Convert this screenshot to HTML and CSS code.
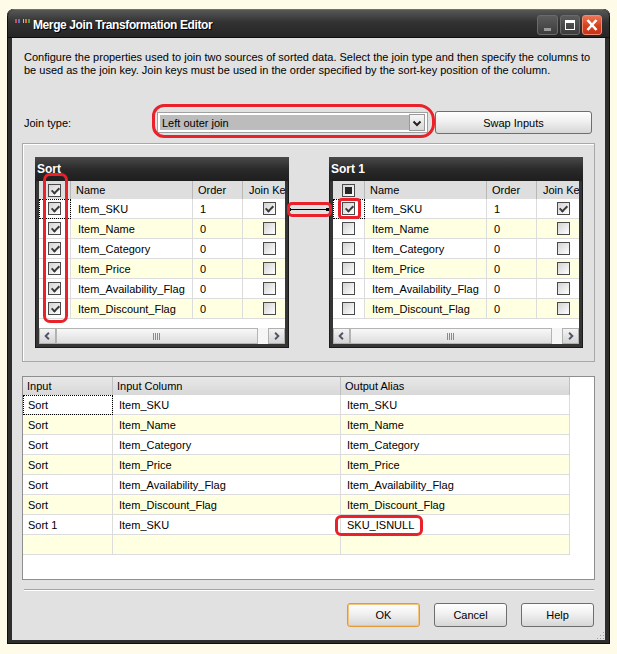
FILE: index.html
```html
<!DOCTYPE html>
<html lang="en">
<head>
    <meta charset="UTF-8">
    <meta name="viewport" content="width=device-width, initial-scale=1.0">
    <title>Merge Join Transformation Editor</title>
    <link rel="stylesheet" href="styles.css">
</head>
<body>
<div class="window">
    <div class="titlebar">
        <span class="app-icon"><i class="i1"></i><i class="i2"></i><i class="i3"></i><i class="i4"></i><i class="i5"></i></span>
        <span class="title">Merge Join Transformation Editor</span>
        <span class="caption-btns">
            <span class="cap-btn min"><i></i></span>
            <span class="cap-btn max"><i></i></span>
            <span class="cap-btn close">
                <svg width="20" height="20" viewBox="0 0 20 20"><path d="M5.5 5 L14.5 15 M14.5 5 L5.5 15" stroke="#fff" stroke-width="2.6" fill="none"/></svg>
            </span>
        </span>
    </div>

    <div class="content">
        <p class="intro">Configure the properties used to join two sources of sorted data. Select the join type and then specify the columns to<br>be used as the join key. Join keys must be used in the order specified by the sort-key position of the column.</p>

        <div class="join-row">
            <label class="join-label">Join type:</label>
            <div class="combo">
                <span class="combo-text">Left outer join</span>
                <span class="combo-drop">
                    <svg width="14" height="16" viewBox="0 0 14 16"><path d="M3.5 6.5 L7 10 L10.5 6.5" stroke="#222" stroke-width="2" fill="none"/></svg>
                </span>
            </div>
            <button class="btn swap">Swap Inputs</button>
        </div>

        <div class="inputs">
            <div class="src">
                <div class="src-title">Sort</div>
                <div class="src-grid">
                    <div class="row head"><span class="c0"><i class="cb on"></i></span><span class="c1">Name</span><span class="c2">Order</span><span class="c3">Join Key</span></div>
                    <div class="row"><span class="c0 focus"><i class="cb on"></i></span><span class="c1">Item_SKU</span><span class="c2">1</span><span class="c3"><i class="cb on"></i></span></div>
                    <div class="row alt"><span class="c0"><i class="cb on"></i></span><span class="c1">Item_Name</span><span class="c2">0</span><span class="c3"><i class="cb"></i></span></div>
                    <div class="row"><span class="c0"><i class="cb on"></i></span><span class="c1">Item_Category</span><span class="c2">0</span><span class="c3"><i class="cb"></i></span></div>
                    <div class="row alt"><span class="c0"><i class="cb on"></i></span><span class="c1">Item_Price</span><span class="c2">0</span><span class="c3"><i class="cb"></i></span></div>
                    <div class="row"><span class="c0"><i class="cb on"></i></span><span class="c1">Item_Availability_Flag</span><span class="c2">0</span><span class="c3"><i class="cb"></i></span></div>
                    <div class="row alt"><span class="c0"><i class="cb on"></i></span><span class="c1">Item_Discount_Flag</span><span class="c2">0</span><span class="c3"><i class="cb"></i></span></div>
                    <div class="hscroll">
                        <span class="sb-btn"><svg width="16" height="14" viewBox="0 0 16 14"><path d="M9.5 3.5 L6 7 L9.5 10.5" stroke="#4c5466" stroke-width="2" fill="none"/></svg></span>
                        <span class="sb-thumb"><i class="grip"></i></span>
                        <span class="sb-btn"><svg width="16" height="14" viewBox="0 0 16 14"><path d="M6.5 3.5 L10 7 L6.5 10.5" stroke="#4c5466" stroke-width="2" fill="none"/></svg></span>
                    </div>
                </div>
            </div>

            <div class="src">
                <div class="src-title">Sort 1</div>
                <div class="src-grid">
                    <div class="row head"><span class="c0"><i class="cb part"></i></span><span class="c1">Name</span><span class="c2">Order</span><span class="c3">Join Key</span></div>
                    <div class="row"><span class="c0 focus"><i class="cb on"></i></span><span class="c1">Item_SKU</span><span class="c2">1</span><span class="c3"><i class="cb on"></i></span></div>
                    <div class="row alt"><span class="c0"><i class="cb"></i></span><span class="c1">Item_Name</span><span class="c2">0</span><span class="c3"><i class="cb"></i></span></div>
                    <div class="row"><span class="c0"><i class="cb"></i></span><span class="c1">Item_Category</span><span class="c2">0</span><span class="c3"><i class="cb"></i></span></div>
                    <div class="row alt"><span class="c0"><i class="cb"></i></span><span class="c1">Item_Price</span><span class="c2">0</span><span class="c3"><i class="cb"></i></span></div>
                    <div class="row"><span class="c0"><i class="cb"></i></span><span class="c1">Item_Availability_Flag</span><span class="c2">0</span><span class="c3"><i class="cb"></i></span></div>
                    <div class="row alt"><span class="c0"><i class="cb"></i></span><span class="c1">Item_Discount_Flag</span><span class="c2">0</span><span class="c3"><i class="cb"></i></span></div>
                    <div class="hscroll">
                        <span class="sb-btn"><svg width="16" height="14" viewBox="0 0 16 14"><path d="M9.5 3.5 L6 7 L9.5 10.5" stroke="#4c5466" stroke-width="2" fill="none"/></svg></span>
                        <span class="sb-thumb"><i class="grip"></i></span>
                        <span class="sb-btn"><svg width="16" height="14" viewBox="0 0 16 14"><path d="M6.5 3.5 L10 7 L6.5 10.5" stroke="#4c5466" stroke-width="2" fill="none"/></svg></span>
                    </div>
                </div>
            </div>
        </div>

        <div class="output">
            <div class="out-row out-head"><span>Input</span><span>Input Column</span><span>Output Alias</span></div>
            <div class="out-row"><span class="focus">Sort</span><span>Item_SKU</span><span>Item_SKU</span></div>
            <div class="out-row alt"><span>Sort</span><span>Item_Name</span><span>Item_Name</span></div>
            <div class="out-row"><span>Sort</span><span>Item_Category</span><span>Item_Category</span></div>
            <div class="out-row alt"><span>Sort</span><span>Item_Price</span><span>Item_Price</span></div>
            <div class="out-row"><span>Sort</span><span>Item_Availability_Flag</span><span>Item_Availability_Flag</span></div>
            <div class="out-row alt"><span>Sort</span><span>Item_Discount_Flag</span><span>Item_Discount_Flag</span></div>
            <div class="out-row"><span>Sort 1</span><span>Item_SKU</span><span>SKU_ISNULL</span></div>
            <div class="out-row alt"><span></span><span></span><span></span></div>
        </div>

        <div class="sep"></div>

        <div class="actions">
            <button class="btn ok">OK</button>
            <button class="btn">Cancel</button>
            <button class="btn">Help</button>
        </div>

        <!-- links and red markers drawn over the dialog -->
        <span class="link-line"></span>
        <span class="mark mark-combo"></span>
        <span class="mark mark-col"></span>
        <span class="mark mark-link"></span>
        <span class="mark mark-cb"></span>
        <span class="mark mark-alias"></span>
        <span class="resize-grip"></span>
    </div>
</div>
</body>
</html>
```

FILE: styles.css
```css
body {
    margin: 0;
    background: #fefbe8;
    font-family: "Liberation Sans", Arial, sans-serif;
    font-size: 11px;
    color: #000;
}

.window {
    margin: 9px 0 0 7px;
    width: 603px;
    box-sizing: border-box;
    padding: 0 5px 4px;
    background: #2e2e2e;
    border-radius: 7px 7px 0 0;
    box-shadow: inset 0 0 0 1px #0e0e0e;
}

/* title bar */
.titlebar {
    display: flex;
    align-items: center;
    height: 29px;
    margin: 0 -5px;
    padding: 0 8px;
    background: linear-gradient(#5a5a5a, #323232 45%, #242424);
    border-radius: 7px 7px 0 0;
    box-shadow: inset 0 1px 0 #707070, inset 0 0 0 1px #0e0e0e;
}

.app-icon {
    display: flex;
    gap: 1px;
    width: 15px;
    margin-top: -6px;
}

.app-icon i {
    display: block;
    width: 2px;
    height: 4px;
}

.app-icon .i1 { background: #d24a4a; }
.app-icon .i2 { background: #4a7ad2; margin-right: 2px; }
.app-icon .i3 { background: #e0c040; }
.app-icon .i4 { background: #e07030; }
.app-icon .i5 { background: #50a050; }

.title {
    margin-left: 3px;
    margin-top: 3px;
    color: #fff;
    font-weight: bold;
    font-size: 12px;
    letter-spacing: -0.4px;
    text-shadow: 1px 1px 0 #000;
}

.caption-btns {
    display: flex;
    gap: 2px;
    margin-left: auto;
    margin-top: 3px;
}

.cap-btn {
    position: relative;
    display: block;
    width: 20px;
    height: 20px;
    box-sizing: border-box;
    border: 1px solid #6a6a6a;
    border-radius: 3px;
    background: linear-gradient(#5c5c5c, #3c3c3c);
}

.cap-btn.min {
    width: 21px;
}

.cap-btn.min i {
    position: absolute;
    left: 6px;
    top: 12px;
    width: 7px;
    height: 3px;
    background: #9a9a9a;
}

.cap-btn.max i {
    position: absolute;
    left: 4px;
    top: 4px;
    width: 10px;
    height: 10px;
    box-sizing: border-box;
    border: 1px solid #fff;
    border-top-width: 3px;
}

.cap-btn.close {
    border-color: #f08a70;
    background: linear-gradient(#ee7656, #d4401e 55%, #c8341a);
}

.cap-btn.close svg {
    display: block;
    margin: -1px;
}

/* body */
.content {
    position: relative;
    height: 602px;
    background: #e1e1e1;
    overflow: hidden;
}

.intro {
    margin: 13px 0 0 12px;
    line-height: 13px;
    white-space: nowrap;
}

.join-row {
    display: flex;
    align-items: center;
    height: 23px;
    margin-top: 34px;
    padding-left: 12px;
}

.join-label {
    width: 133px;
}

.combo {
    display: flex;
    align-items: center;
    width: 271px;
    height: 21px;
    box-sizing: border-box;
    border: 1px solid #a0a0a0;
    box-shadow: inset 0 0 0 2px #fff;
    background: #bcbcbc;
}

.combo-text {
    flex: 1;
    padding-left: 4px;
}

.combo-drop {
    display: flex;
    align-items: center;
    justify-content: center;
    width: 16px;
    height: 17px;
    margin-right: 2px;
    box-sizing: border-box;
    border: 1px solid #9a9a9a;
    background: linear-gradient(#f6f6f6, #d8d8d8);
}

.btn {
    width: 73px;
    height: 24px;
    padding: 0;
    border: 1px solid #6e6e6e;
    border-radius: 3px;
    background: linear-gradient(#ffffff, #f0f0f0 45%, #d6d6d6);
    font-family: "Liberation Sans", Arial, sans-serif;
    font-size: 11px;
    color: #000;
}

.btn.swap {
    width: 157px;
    height: 23px;
    margin-left: 7px;
}

.btn.ok {
    border-color: #e09a3a;
    box-shadow: inset 0 0 0 1px #f7c27a;
}

/* input sources */
.inputs {
    display: flex;
    gap: 40px;
    height: 219px;
    box-sizing: border-box;
    margin: 9px 0 0 10px;
    width: 573px;
    padding: 13px 0 0 12px;
    border: 1px solid #a8a8a8;
    box-shadow: inset 1px 1px 0 #fff;
}

.src {
    width: 254px;
    height: 191px;
    box-sizing: border-box;
    padding: 0 4px 4px;
    background: #353535;
    box-shadow: inset 0 0 0 1px #1a1a1a;
}

.src-title {
    height: 24px;
    margin: 0 -4px;
    padding-left: 2px;
    line-height: 24px;
    color: #fff;
    font-weight: bold;
    font-size: 12px;
    background: linear-gradient(#4a4a4a, #2a2a2a 50%, #1e1e1e);
}

.src-grid {
    height: 163px;
    overflow: hidden;
    background: #fff;
}

.row {
    display: grid;
    grid-template-columns: 32px 122px 50px 53px;
    height: 20px;
}

.row > span {
    display: flex;
    align-items: center;
    box-sizing: border-box;
    padding-left: 7px;
    border-right: 1px solid #dcdcdc;
    border-bottom: 1px solid #dcdcdc;
    white-space: nowrap;
    overflow: hidden;
}

.row > .c0,
.row > .c3 {
    justify-content: center;
    padding-left: 0;
}

.row.alt > span {
    background: #ffffe1;
}

.row.alt > .c0 {
    background: #fff;
}

.row.head {
    height: 18px;
}

.row.head > span {
    padding-left: 5px;
    background: #dedede;
    border-right-color: #b8b8b8;
    border-bottom: none;
}

.row.head > .c3 {
    justify-content: flex-start;
    padding-left: 6px;
}

.row.head > .c0 {
    justify-content: center;
    padding-left: 0;
}

.row > .focus {
    outline: 1px dotted #000;
    outline-offset: -1px;
}

.cb {
    position: relative;
    display: block;
    width: 13px;
    height: 13px;
    box-sizing: border-box;
    border: 1px solid #4a4a4a;
    background: linear-gradient(135deg, #d2d2d2, #ffffff);
}

.cb.on::after {
    content: "";
    position: absolute;
    left: 3.5px;
    top: 1px;
    width: 3px;
    height: 6px;
    border: solid #3a3a3a;
    border-width: 0 2px 2px 0;
    transform: rotate(45deg);
}

.cb.part::after {
    content: "";
    position: absolute;
    left: 2px;
    top: 2px;
    width: 7px;
    height: 7px;
    background: #262626;
}

.hscroll {
    display: flex;
    height: 16px;
    margin-top: 9px;
    background: #f6f6f6;
}

.sb-btn {
    display: flex;
    align-items: center;
    justify-content: center;
    width: 17px;
    box-sizing: border-box;
    border: 1px solid #b0b0b0;
    background: linear-gradient(#f4f4f4, #d4d4d4);
}

.sb-thumb {
    flex: 1;
    display: flex;
    align-items: center;
    justify-content: center;
    margin-right: 10px;
    box-sizing: border-box;
    border: 1px solid #b4b4b4;
    background: linear-gradient(#f8f8f8, #dedede);
}

.grip {
    width: 8px;
    height: 7px;
    background: repeating-linear-gradient(90deg, #8a8a8a 0 1px, transparent 1px 2px);
}

/* output columns */
.output {
    height: 204px;
    box-sizing: border-box;
    margin: 14px 0 0 10px;
    width: 573px;
    border: 1px solid #8e8e8e;
    background: #fff;
}

.out-row {
    display: grid;
    grid-template-columns: 90px 228px 229px;
    height: 20px;
}

.out-row > span {
    display: flex;
    align-items: center;
    box-sizing: border-box;
    padding-left: 5px;
    border-right: 1px solid #dcdcdc;
    border-bottom: 1px solid #dcdcdc;
}

.out-row > span + span {
    padding-left: 6px;
}

.out-row.alt > span {
    background: #ffffe1;
}

.out-row.out-head {
    height: 18px;
}

.out-row.out-head > span {
    padding-left: 4px;
    background: linear-gradient(#e8e8e8, #d8d8d8);
    border-right-color: #c0c0c0;
    border-bottom: none;
}

.out-row > .focus {
    outline: 1px dotted #000;
    outline-offset: -1px;
}

.sep {
    width: 570px;
    margin: 9px 0 0 12px;
    border-top: 1px solid #a4a4a4;
    border-bottom: 1px solid #fff;
}

.actions {
    display: flex;
    justify-content: flex-end;
    gap: 14px;
    margin-top: 12px;
    padding-right: 11px;
}

/* overlays */
.link-line {
    position: absolute;
    left: 276px;
    top: 171px;
    width: 41px;
    height: 1px;
    background: #000;
}

.link-line::before,
.link-line::after {
    content: "";
    position: absolute;
    top: -1px;
    width: 3px;
    height: 3px;
    background: #000;
}

.link-line::before { left: 0; }
.link-line::after { right: 0; }

.mark {
    position: absolute;
    box-sizing: border-box;
    border: 3px solid #e8212a;
}

.mark-combo {
    left: 140px;
    top: 66px;
    width: 283px;
    height: 34px;
    border-radius: 12px 16px 14px 12px;
}

.mark-col {
    left: 31px;
    top: 135px;
    width: 25px;
    height: 150px;
    border-radius: 7px;
}

.mark-link {
    left: 275px;
    top: 164px;
    width: 45px;
    height: 15px;
    border-radius: 5px;
}

.mark-cb {
    left: 326px;
    top: 160px;
    width: 23px;
    height: 21px;
    border-radius: 4px;
}

.mark-alias {
    left: 323px;
    top: 477px;
    width: 88px;
    height: 21px;
    border-radius: 6px;
}

.resize-grip {
    position: absolute;
    right: 1px;
    bottom: 1px;
    width: 8px;
    height: 8px;
    background: radial-gradient(circle, #a0a0a0 0.8px, transparent 1px) 0 0 / 3px 3px;
    clip-path: polygon(100% 0, 100% 100%, 0 100%);
}
```
